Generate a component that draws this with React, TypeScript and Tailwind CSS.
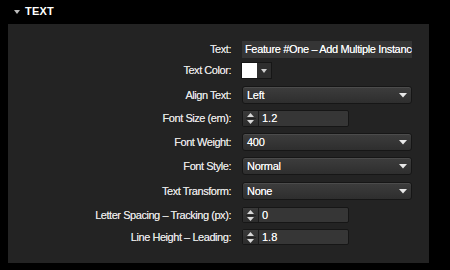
import React from "react";

const font = { fontFamily: '"Liberation Sans", Arial, sans-serif' };

function Label({ children }: { children: React.ReactNode }) {
  return (
    <div className="w-[228px] shrink-0 pr-[5px] text-right text-[11px] tracking-[-0.45px] text-[#e6e6e6] leading-none [text-shadow:0_0_0.5px_rgba(255,255,255,0.7)]">
      {children}
    </div>
  );
}

function Arrow() {
  return (
    <svg width="8" height="5" viewBox="0 0 8 5" className="block">
      <path d="M0 0 H8 L4 4.5 Z" fill="#e8e8e8" />
    </svg>
  );
}

function SelectBox({ value }: { value: string }) {
  return (
    <div className="ml-[6px] flex h-[18px] w-[170px] items-center justify-between rounded-[3px] border border-[#161616] bg-gradient-to-b from-[#3d3d3d] to-[#2e2e2e] pl-[4px] pr-[4px] text-[11px] tracking-[-0.3px] text-white shadow-[inset_0_1px_0_rgba(255,255,255,0.08)] [text-shadow:0_0_0.5px_rgba(255,255,255,0.7)]">
      <span>{value}</span>
      <Arrow />
    </div>
  );
}

function Spinner() {
  return (
    <div className="flex h-full w-[16px] flex-col items-center justify-center gap-[1px] border-r border-[#1a1a1a] bg-gradient-to-b from-[#3a3a3a] to-[#2c2c2c]">
      <svg width="7" height="4" viewBox="0 0 7 4" className="block">
        <path d="M0 4 L3.5 0 L7 4 Z" fill="#d8d8d8" />
      </svg>
      <div className="h-[1px] w-[10px] bg-[#222]" />
      <svg width="7" height="4" viewBox="0 0 7 4" className="block">
        <path d="M0 0 H7 L3.5 4 Z" fill="#d8d8d8" />
      </svg>
    </div>
  );
}

function NumberBox({ value, h }: { value: string; h: string }) {
  return (
    <div className={`ml-[6px] flex ${h} w-[107px] items-stretch rounded-[2px] border border-[#161616] bg-[#363636]`}>
      <Spinner />
      <div className="flex items-center pl-[3px] text-[11px] text-white [text-shadow:0_0_0.5px_rgba(255,255,255,0.7)]">{value}</div>
    </div>
  );
}

export default function App() {
  return (
    <div className="h-[270px] w-[450px] overflow-hidden bg-black" style={font}>
      <div className="flex h-[24px] items-center pl-[14px] pb-[1px]">
        <svg width="6" height="4" viewBox="0 0 6 4" className="mr-[5px] block">
          <path d="M0 0 H6 L3 4 Z" fill="#bdbdbd" />
        </svg>
        <span className="text-[11px] font-bold text-white tracking-[0.2px]">TEXT</span>
      </div>
      <div className="ml-[8px] h-[239px] w-[421px] bg-[#232323] pt-[17px]">
        <div className="flex items-center">
          <Label>Text:</Label>
          <div className="ml-[6px] h-[17px] w-[170px] overflow-hidden bg-[#353535]">
            <div className="flex h-full w-[400px] items-center whitespace-nowrap pl-[3px] text-[11px] tracking-[-0.35px] text-white [text-shadow:0_0_0.5px_rgba(255,255,255,0.7)]">
              Feature #One – Add Multiple Instances
            </div>
          </div>
        </div>
        <div className="mt-[4px] flex items-center">
          <Label>Text Color:</Label>
          <div className="ml-[5px] flex h-[17px] w-[31px] items-stretch border border-[#161616] bg-[#2e2e2e]">
            <div className="w-[15px] bg-white" />
            <div className="flex flex-1 items-center justify-center">
              <svg width="6" height="4" viewBox="0 0 6 4" className="block">
                <path d="M0 0 H6 L3 4 Z" fill="#cfcfcf" />
              </svg>
            </div>
          </div>
        </div>
        <div className="mt-[7px] flex items-center">
          <Label>Align Text:</Label>
          <SelectBox value="Left" />
        </div>
        <div className="mt-[6px] flex items-center">
          <Label>Font Size (em):</Label>
          <NumberBox value="1.2" h="h-[17px]" />
        </div>
        <div className="mt-[6px] flex items-center">
          <Label>Font Weight:</Label>
          <SelectBox value="400" />
        </div>
        <div className="mt-[6px] flex items-center">
          <Label>Font Style:</Label>
          <SelectBox value="Normal" />
        </div>
        <div className="mt-[7px] flex items-center">
          <Label>Text Transform:</Label>
          <SelectBox value="None" />
        </div>
        <div className="mt-[7px] flex items-center">
          <Label>Letter Spacing – Tracking (px):</Label>
          <NumberBox value="0" h="h-[16px]" />
        </div>
        <div className="mt-[6px] flex items-center">
          <Label>Line Height – Leading:</Label>
          <NumberBox value="1.8" h="h-[16px]" />
        </div>
      </div>
    </div>
  );
}
